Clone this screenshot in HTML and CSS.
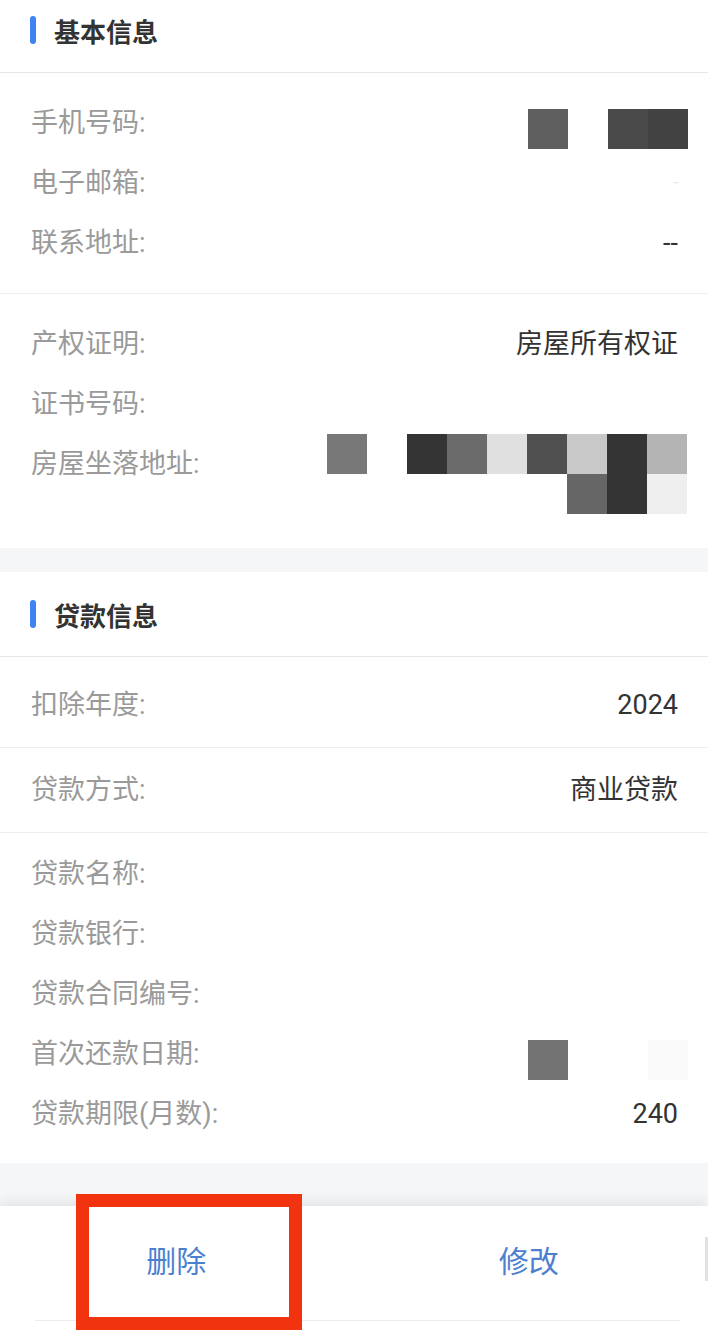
FILE: index.html
```html
<!DOCTYPE html>
<html lang="zh-CN">
<head>
    <meta charset="UTF-8">
    <meta name="viewport" content="width=device-width, initial-scale=1.0">
    <title>住房贷款利息</title>
    <link rel="stylesheet" href="styles.css">
</head>
<body>
    <div class="page">
        <div class="section">
            <div class="section-head">
                <span class="bar"></span>
                <h2>基本信息</h2>
            </div>
            <div class="group">
                <div class="row">
                    <span class="label">手机号码:</span>
                    <div class="mosaic cols-4 low">
                        <i class="t5f"></i><i></i><i class="t4a"></i><i class="t42"></i>
                    </div>
                </div>
                <div class="row">
                    <span class="label">电子邮箱:</span>
                    <span class="value faint">-</span>
                </div>
                <div class="row">
                    <span class="label">联系地址:</span>
                    <span class="value">--</span>
                </div>
            </div>
            <div class="group last">
                <div class="row">
                    <span class="label">产权证明:</span>
                    <span class="value">房屋所有权证</span>
                </div>
                <div class="row">
                    <span class="label">证书号码:</span>
                    <span class="value"></span>
                </div>
                <div class="row top">
                    <span class="label">房屋坐落地址:</span>
                    <div class="mosaic cols-9 wide">
                        <i class="t77"></i><i></i><i class="t33"></i><i class="t6a"></i><i class="te0"></i><i class="t50"></i><i class="tc8"></i><i class="t33"></i><i class="tb4"></i>
                        <i></i><i></i><i></i><i></i><i></i><i></i><i class="t66"></i><i class="t33"></i><i class="tee"></i>
                    </div>
                </div>
            </div>
        </div>

        <div class="gap"></div>

        <div class="section">
            <div class="section-head">
                <span class="bar"></span>
                <h2>贷款信息</h2>
            </div>
            <div class="group single first">
                <div class="row">
                    <span class="label">扣除年度:</span>
                    <span class="value">2024</span>
                </div>
            </div>
            <div class="group single">
                <div class="row">
                    <span class="label">贷款方式:</span>
                    <span class="value">商业贷款</span>
                </div>
            </div>
            <div class="group tail">
                <div class="row">
                    <span class="label">贷款名称:</span>
                </div>
                <div class="row">
                    <span class="label">贷款银行:</span>
                </div>
                <div class="row">
                    <span class="label">贷款合同编号:</span>
                </div>
                <div class="row">
                    <span class="label">首次还款日期:</span>
                    <div class="mosaic cols-4 low">
                        <i class="t70"></i><i></i><i></i><i class="tf8"></i>
                    </div>
                </div>
                <div class="row">
                    <span class="label">贷款期限(月数):</span>
                    <span class="value">240</span>
                </div>
            </div>
        </div>

        <div class="gap bottom-gap"></div>

        <div class="footer">
            <div class="actions">
                <button class="action">删除</button>
                <button class="action">修改</button>
                <span class="edge"></span>
            </div>
            <div class="home-line"></div>
            <div class="highlight"></div>
        </div>
    </div>
</body>
</html>
```

FILE: styles.css
```css
html, body {
    margin: 0;
    padding: 0;
    height: 100%;
    overflow: hidden;
    background: #ffffff;
}
body {
    font-family: Roboto, "Noto Sans CJK SC", sans-serif;
    color: #333;
}
.page {
    margin-top: -12px;
}
.section {
    background: #ffffff;
}
.section-head {
    height: 84px;
    display: flex;
    align-items: center;
    padding-left: 30px;
    border-bottom: 1px solid #e6e6e6;
}
.bar {
    width: 6px;
    height: 28px;
    border-radius: 3px;
    background: #3f82f2;
    margin-right: 18px;
}
.section-head h2 {
    margin: 0;
    font-size: 26px;
    font-weight: bold;
    color: #333;
    font-family: "Noto Sans CJK SC", sans-serif;
}
.group {
    padding: 20px 0;
    border-bottom: 1px solid #eeeeee;
}
.group.last {
    padding-bottom: 34px;
    border-bottom: none;
}
.group.single {
    padding: 12px 0;
}
.group.single.first {
    padding-top: 18px;
}
.group.tail {
    padding: 11px 0 19px;
    border-bottom: none;
}
.row {
    display: flex;
    justify-content: space-between;
    align-items: center;
    min-height: 60px;
    padding: 0 30px 0 31px;
}
.row.top {
    align-items: flex-start;
}
.label {
    font-size: 27px;
    line-height: 60px;
    color: #9a9a9a;
}
.value {
    font-size: 27px;
    line-height: 60px;
    color: #333;
}
.value.faint {
    color: #e4e4e4;
    font-size: 16px;
}
.mosaic {
    display: grid;
    grid-auto-rows: 40px;
}
.mosaic.cols-4 {
    grid-template-columns: repeat(4, 40px);
    margin-right: -10px;
}
.mosaic.cols-9 {
    grid-template-columns: repeat(9, 40px);
    margin-right: -9px;
}
.mosaic.low {
    margin-top: 12px;
}
.mosaic i { display: block; }
.t33 { background: #343434; }
.t42 { background: #424242; }
.t4a { background: #4a4a4a; }
.t50 { background: #505050; }
.t5f { background: #5f5f5f; }
.t66 { background: #666666; }
.t6a { background: #6b6b6b; }
.t70 { background: #727272; }
.t77 { background: #787878; }
.tb4 { background: #b4b4b4; }
.tc8 { background: #c9c9c9; }
.te0 { background: #e0e0e0; }
.tee { background: #efefef; }
.tf8 { background: #f9f9f9; }
.gap {
    height: 24px;
    background: #f5f6f8;
}
.gap.bottom-gap {
    height: 43px;
}
.footer {
    position: relative;
    height: 128px;
    background: #ffffff;
    box-shadow: 0 -4px 12px rgba(0,0,0,0.08);
}
.actions {
    display: flex;
    align-items: center;
    height: 106px;
}
.action {
    flex: 1;
    background: none;
    border: none;
    padding: 0;
    font-family: "Noto Sans CJK SC", sans-serif;
    font-size: 30px;
    color: #4c80cf;
}
.edge {
    width: 3px;
    height: 44px;
    background: #e2e2e2;
}
.home-line {
    height: 1px;
    margin: 8px 28px 0 35px;
    background: #ececec;
}
.highlight {
    position: absolute;
    left: 76px;
    top: -12px;
    width: 200px;
    height: 110px;
    border: 13px solid #f2330f;
}
```
